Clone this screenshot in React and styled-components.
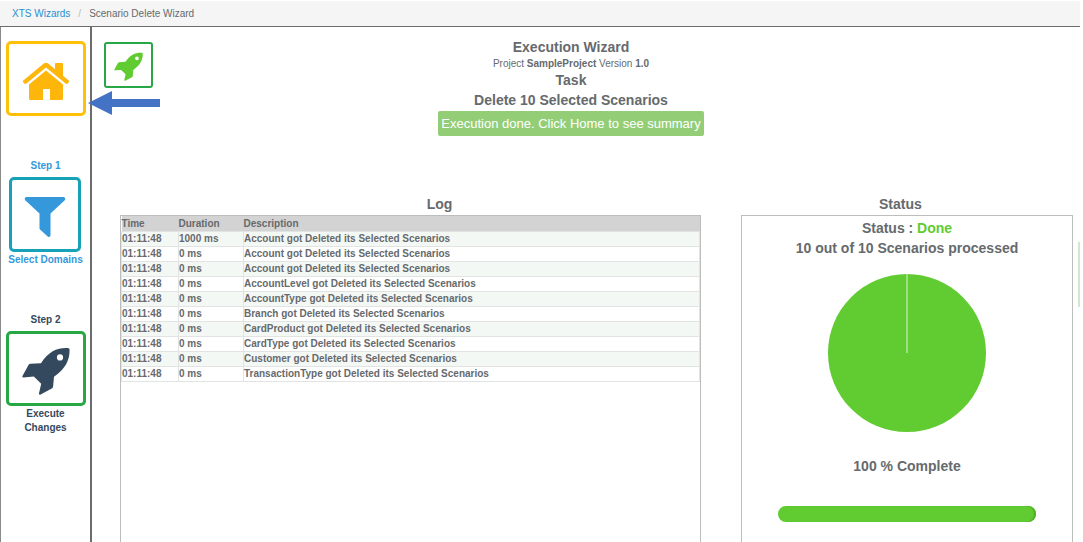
import styled, { createGlobalStyle } from "styled-components";

const logs = [
  { time: "01:11:48", duration: "1000 ms", item: "Account" },
  { time: "01:11:48", duration: "0 ms", item: "Account" },
  { time: "01:11:48", duration: "0 ms", item: "Account" },
  { time: "01:11:48", duration: "0 ms", item: "AccountLevel" },
  { time: "01:11:48", duration: "0 ms", item: "AccountType" },
  { time: "01:11:48", duration: "0 ms", item: "Branch" },
  { time: "01:11:48", duration: "0 ms", item: "CardProduct" },
  { time: "01:11:48", duration: "0 ms", item: "CardType" },
  { time: "01:11:48", duration: "0 ms", item: "Customer" },
  { time: "01:11:48", duration: "0 ms", item: "TransactionType" },
];

const HomeIcon = () => (
  <svg width="48" height="40" viewBox="0 0 48 40" fill="currentColor">
    <path d="M24 9.5 41 23.5V37.5a1.5 1.5 0 0 1-1.5 1.5H28V28h-7v11H8.5a1.5 1.5 0 0 1-1.5-1.5V23.5Z" />
    <path d="M21.8 2.6q2.2-1.8 4.4 0L33 8.2V3a1 1 0 0 1 1-1h6a1 1 0 0 1 1 1v11.8l5.7 4.7q.9.8.1 1.7l-1.2 1.4q-.8.9-1.7.1L24 6.6 4.1 22.7q-.9.8-1.7-.1l-1.2-1.4q-.8-.9.1-1.7Z" />
  </svg>
);

const FilterIcon = () => (
  <svg width="42" height="42" viewBox="0 0 42 42" fill="currentColor">
    <path d="M2 1h38q2 1 1 3L26.5 17.5V39.5q-.5 2-2.500 1.200L16 33.500q-.5-.5-.5-1.500V17.500L1 4Q0 2 2 1Z" />
  </svg>
);

const RocketIcon = ({ size }) => (
  <svg width={size} height={size} viewBox="0 0 48 48" fill="currentColor">
    <path
      fillRule="evenodd"
      d="M46.5 1.2C36 .5 27 4 19 16.3L8.5 16.8q-1.3 0-2 1.2L.6 28.8q-.8 1.5.8 1.6l10.400-.8 7.400 7.200-2.200 9.400q-.1 1.800 1.600 1.400l11.200-6q1.200-.7 1.300-2l.9-9.800C44 21.500 48 12.500 47.500 2.200q0-1-1-1ZM38 7.300a3.100 3.100 0 1 0 0 6.200 3.100 3.100 0 0 0 0-6.200Z"
    />
  </svg>
);

function App() {
  return (
    <Page>
      <GlobalStyle />
      <Breadcrumb aria-label="Breadcrumb">
        <a href="#wizards">XTS Wizards</a>
        <span className="separator">/</span>
        <span>Scenario Delete Wizard</span>
      </Breadcrumb>
      <Body>
        <Sidebar>
          <StepButton $color="#ffb60a" $border="#ffc107" aria-label="Home">
            <HomeIcon />
          </StepButton>
          <Step $color="#3498db" $gap="43px">
            <span>Step 1</span>
            <StepButton $narrow $color="#3498db" $border="#17a2b8" aria-label="Select Domains">
              <FilterIcon />
            </StepButton>
            <span>Select Domains</span>
          </Step>
          <Step $color="#34495e" $gap="46px">
            <span>Step 2</span>
            <StepButton $color="#34495e" $border="#28a745" aria-label="Execute Changes">
              <RocketIcon size={48} />
            </StepButton>
            <span>
              Execute
              <br />
              Changes
            </span>
          </Step>
        </Sidebar>
        <Main>
          <Pointer width="72" height="24" viewBox="0 0 72 24">
            <path d="M0 12 24 0v8h48v8H24v8Z" fill="#4472c4" />
          </Pointer>
          <Top>
            <RunButton aria-label="Execute">
              <RocketIcon size={29} />
            </RunButton>
            <Heading>
              <h1>Execution Wizard</h1>
              <p>
                Project <b>SampleProject</b> Version <b>1.0</b>
              </p>
              <h2>Task</h2>
              <h2>Delete 10 Selected Scenarios</h2>
              <Notice role="status">Execution done. Click Home to see summary</Notice>
            </Heading>
          </Top>
          <Panels>
            <section>
              <PanelTitle $indent="10%">Log</PanelTitle>
              <Panel>
                <LogTable>
                  <thead>
                    <tr>
                      <th className="time">Time</th>
                      <th className="duration">Duration</th>
                      <th>Description</th>
                    </tr>
                  </thead>
                  <tbody>
                    {logs.map((log, index) => (
                      <tr key={index}>
                        <td>{log.time}</td>
                        <td>{log.duration}</td>
                        <td>{log.item} got Deleted its Selected Scenarios</td>
                      </tr>
                    ))}
                  </tbody>
                </LogTable>
              </Panel>
            </section>
            <section>
              <PanelTitle $outdent="4%">Status</PanelTitle>
              <Panel>
                <StatusContent>
                  <p>
                    Status : <Done>Done</Done>
                  </p>
                  <p>10 out of 10 Scenarios processed</p>
                  <Pie width="158" height="158" viewBox="0 0 158 158">
                    <circle cx="79" cy="79" r="79" fill="#61cb32" />
                    <path d="M79 0v79" stroke="#b5e5a0" strokeWidth="1.5" />
                  </Pie>
                  <p>100 % Complete</p>
                  <Progress role="progressbar" aria-label="Progress" aria-valuenow={100} />
                </StatusContent>
              </Panel>
            </section>
          </Panels>
        </Main>
        <SideTab />
      </Body>
    </Page>
  );
}

const GlobalStyle = createGlobalStyle`
  * {
    box-sizing: border-box;
  }
  body {
    margin: 0;
    background: #fff;
    color: #666a6d;
    font-family: "Liberation Sans", Arial, sans-serif;
    overflow: hidden;
  }
  h1, h2, p {
    margin: 0;
  }
  button {
    font: inherit;
    cursor: pointer;
  }
`;
const Page = styled.div`
  display: flex;
  flex-direction: column;
  height: 100vh;
  padding-right: 3px;
`;
const Breadcrumb = styled.nav`
  display: flex;
  align-items: center;
  flex: none;
  height: 27px;
  padding-left: 12px;
  background: #f5f5f5;
  border-top: 1px solid #fff;
  border-bottom: 1px solid #6c6c6c;
  font-size: 10px;
  a {
    color: #2b8fd0;
    text-decoration: none;
  }
  .separator {
    margin: 0 8px;
    color: #bbb;
  }
`;
const Body = styled.div`
  display: flex;
  flex: 1;
  min-height: 0;
`;
const Sidebar = styled.aside`
  display: flex;
  flex-direction: column;
  align-items: center;
  flex: none;
  width: 92px;
  padding-top: 14px;
  border-left: 1px solid #8a8a8a;
  border-right: 2px solid #6c6c6c;
`;
const StepButton = styled.button`
  display: flex;
  align-items: center;
  justify-content: center;
  width: ${({ $narrow }) => ($narrow ? "72px" : "80px")};
  height: 75px;
  padding: 4px 0 0;
  color: ${({ $color }) => $color};
  background: #fff;
  border: 3px solid ${({ $border }) => $border};
  border-radius: 5px;
`;
const Step = styled.div`
  display: flex;
  flex-direction: column;
  align-items: center;
  margin-top: ${({ $gap }) => $gap};
  color: ${({ $color }) => $color};
  font-size: 10px;
  font-weight: bold;
  line-height: 14px;
  text-align: center;
  ${StepButton} {
    margin: 4px 0 1px;
  }
`;
const Main = styled.main`
  position: relative;
  display: flex;
  flex-direction: column;
  flex: 1;
  min-width: 0;
`;
const Pointer = styled.svg`
  position: absolute;
  top: 64px;
  left: -4px;
`;
const Top = styled.header`
  display: grid;
  grid-template-columns: 48px 1fr 76px;
  flex: none;
  padding: 10px 12px 0;
`;
const RunButton = styled.button`
  display: flex;
  align-items: center;
  justify-content: center;
  width: 49px;
  height: 46px;
  margin-top: 5px;
  padding: 3px 0 0;
  color: #61cb32;
  background: #fff;
  border: 2px solid #28a745;
  border-radius: 3px;
`;
const Heading = styled.div`
  display: flex;
  flex-direction: column;
  align-items: center;
  h1, h2 {
    font-size: 14px;
    line-height: 20px;
  }
  p {
    font-size: 10px;
    line-height: 13px;
  }
`;
const Notice = styled.div`
  margin-top: 1px;
  padding: 0 3px;
  color: #fff;
  background: #93ce77;
  border-radius: 2px;
  font-size: 13px;
  line-height: 25px;
`;
const Panels = styled.div`
  display: grid;
  grid-template-columns: 581fr 332fr;
  gap: 40px;
  flex: 1;
  min-height: 0;
  padding: 57px 5px 0 28px;
  section {
    display: flex;
    flex-direction: column;
    min-width: 0;
  }
`;
const PanelTitle = styled.h2`
  padding-left: ${({ $indent }) => $indent || 0};
  padding-right: ${({ $outdent }) => $outdent || 0};
  font-size: 14px;
  line-height: 22px;
  text-align: center;
`;
const Panel = styled.div`
  flex: 1;
  border: 1px solid #bdbdbd;
  border-bottom: 0;
`;
const LogTable = styled.table`
  width: 100%;
  table-layout: fixed;
  border-collapse: collapse;
  font-size: 10px;
  font-weight: bold;
  line-height: 14px;
  text-align: left;
  th, td {
    padding: 0;
  }
  th {
    padding-top: 1px;
    background: #d3d3d3;
  }
  td {
    border: 1px solid #e2e4e3;
  }
  tbody tr:nth-child(odd) {
    background: #f4f8f5;
  }
  .time {
    width: 57px;
  }
  .duration {
    width: 65px;
  }
`;
const StatusContent = styled.div`
  display: flex;
  flex-direction: column;
  align-items: center;
  padding-top: 2px;
  font-size: 14px;
  font-weight: bold;
  line-height: 20px;
`;
const Done = styled.span`
  color: #61cb32;
`;
const Pie = styled.svg`
  margin: 16px 0 24px;
`;
const Progress = styled.div`
  width: 78%;
  height: 16px;
  margin-top: 30px;
  background: #61cb32;
  border-radius: 8px;
  box-shadow: inset -2px 0 1px #4fae27;
`;
const SideTab = styled.div`
  flex: none;
  align-self: flex-start;
  width: 2px;
  height: 65px;
  margin-top: 215px;
  background: #d5e5ce;
`;

export default App;
